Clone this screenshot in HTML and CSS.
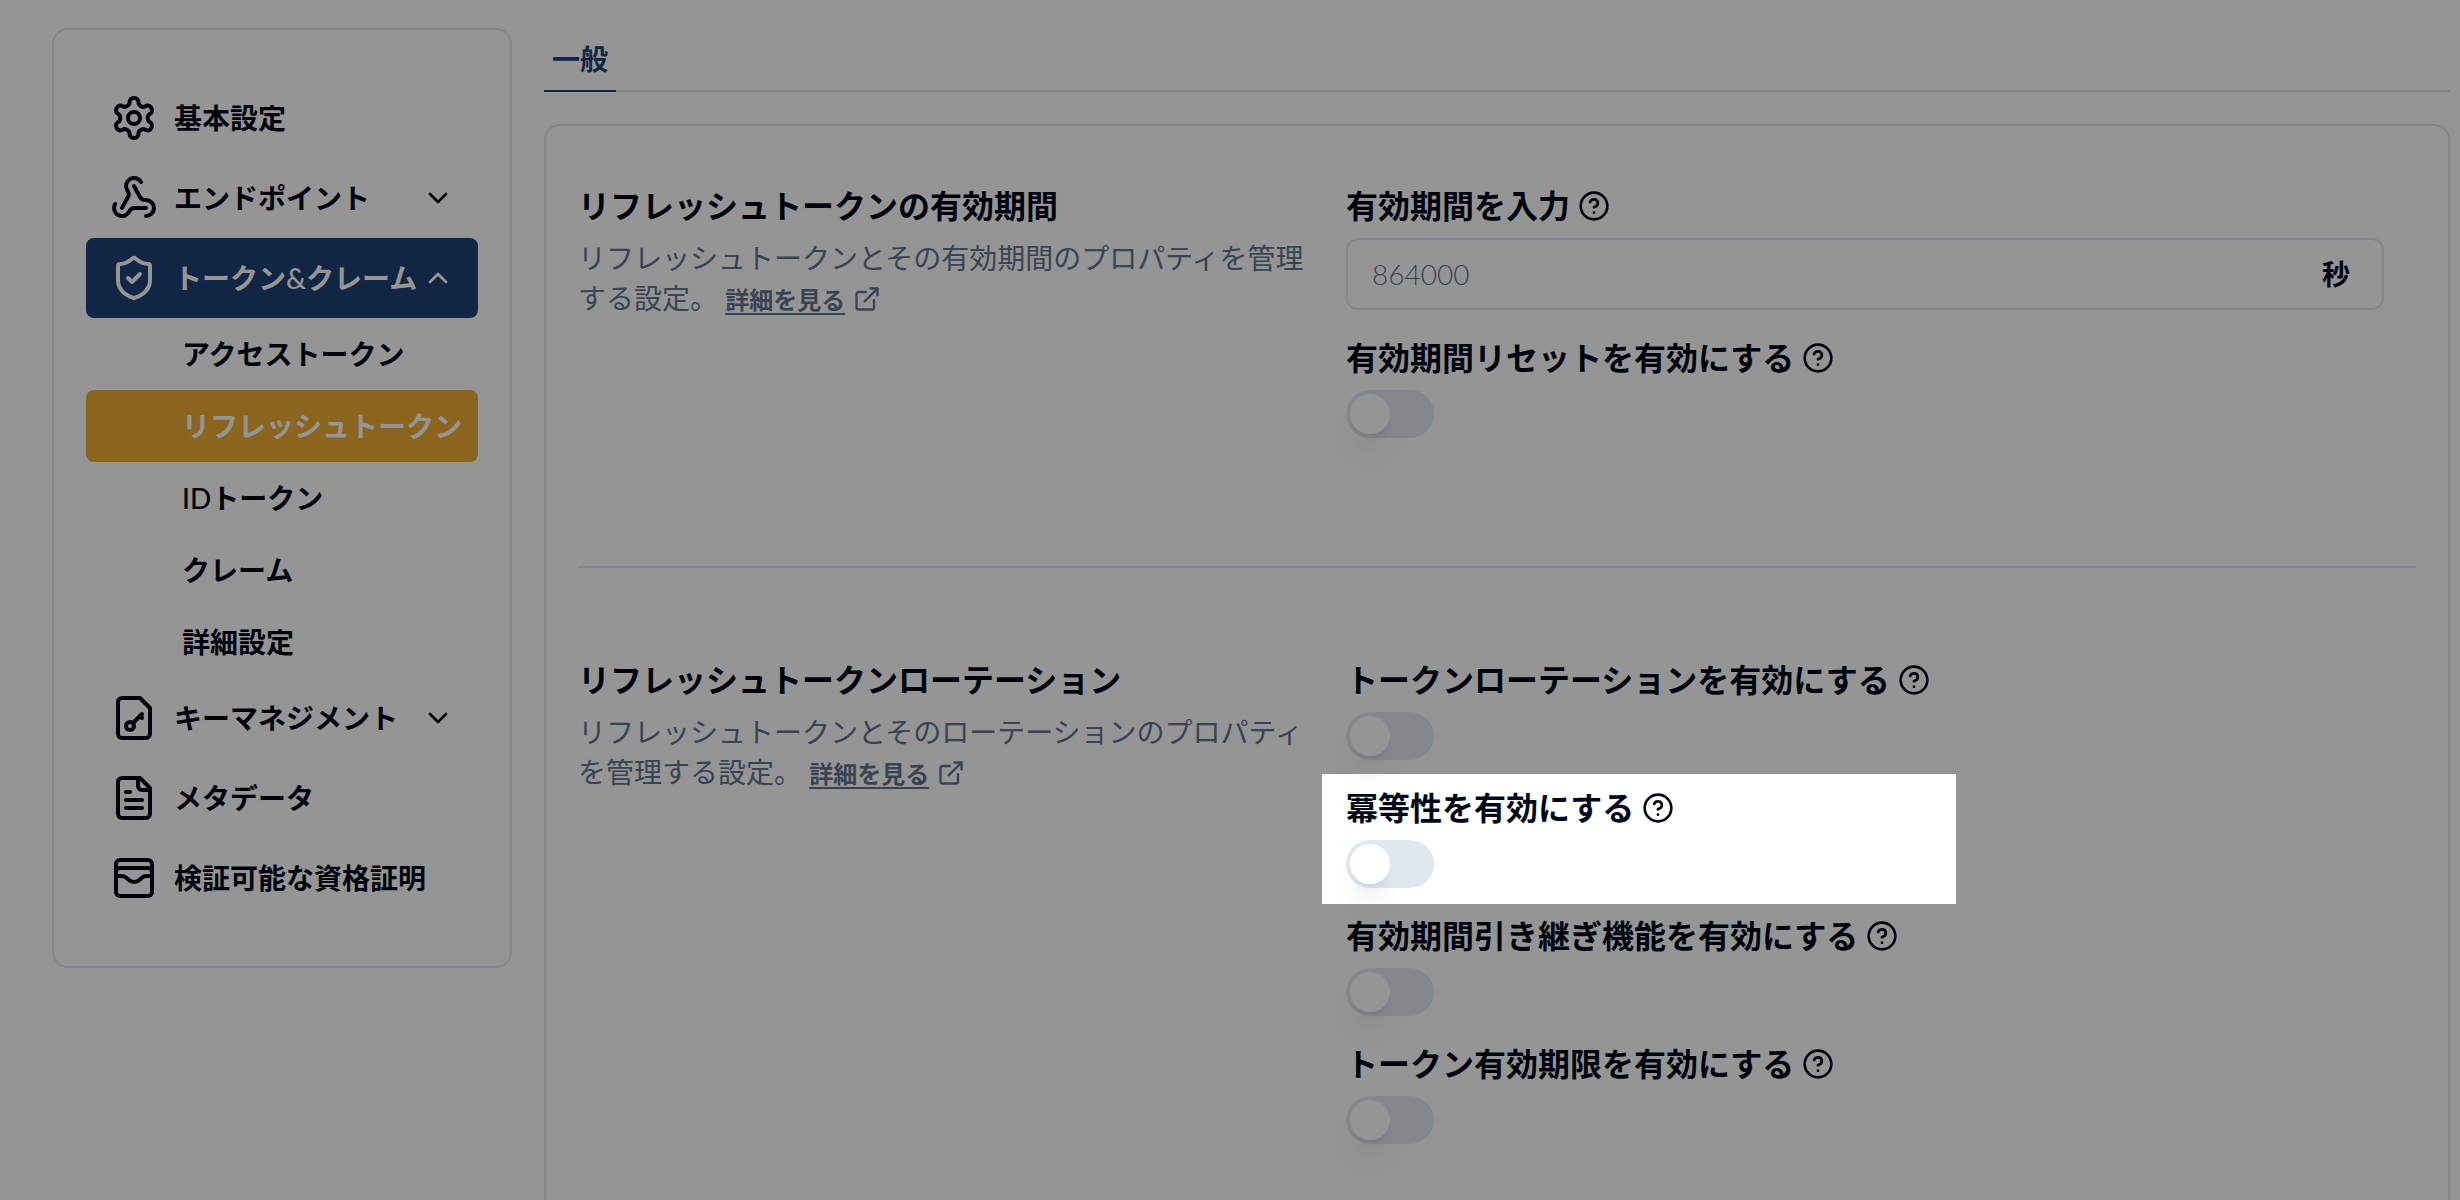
FILE: index.html
```
<!DOCTYPE html>
<html lang="ja">
<head>
  <meta charset="UTF-8" />
  <meta name="viewport" content="width=device-width, initial-scale=1" />
  <title>リフレッシュトークン</title>
  <link rel="stylesheet" href="styles.css">
</head>
<body>
  <!-- Shared icons -->
  <svg class="sprite" aria-hidden="true">
    <symbol id="i-help" viewBox="0 0 24 24">
      <circle cx="12" cy="12" r="10"/><path d="M9.09 9a3 3 0 0 1 5.83 1c0 2-3 3-3 3"/><path d="M12 17h.01"/>
    </symbol>
    <symbol id="i-external" viewBox="0 0 24 24">
      <path d="M15 3h6v6"/><path d="M10 14 21 3"/><path d="M18 13v6a2 2 0 0 1-2 2H5a2 2 0 0 1-2-2V8a2 2 0 0 1 2-2h6"/>
    </symbol>
    <symbol id="i-down" viewBox="0 0 24 24"><path d="m6 9 6 6 6-6"/></symbol>
    <symbol id="i-up" viewBox="0 0 24 24"><path d="m18 15-6-6-6 6"/></symbol>
  </svg>

  <div class="page">
    <nav class="sidebar">
      <a class="nav-item" href="#">
        <svg class="icon icon-lg" viewBox="0 0 24 24"><path d="M12.22 2h-.44a2 2 0 0 0-2 2v.18a2 2 0 0 1-1 1.73l-.43.25a2 2 0 0 1-2 0l-.15-.08a2 2 0 0 0-2.73.73l-.22.38a2 2 0 0 0 .73 2.73l.15.1a2 2 0 0 1 1 1.72v.51a2 2 0 0 1-1 1.74l-.15.09a2 2 0 0 0-.73 2.73l.22.38a2 2 0 0 0 2.73.73l.15-.08a2 2 0 0 1 2 0l.43.25a2 2 0 0 1 1 1.73V20a2 2 0 0 0 2 2h.44a2 2 0 0 0 2-2v-.18a2 2 0 0 1 1-1.73l.43-.25a2 2 0 0 1 2 0l.15.08a2 2 0 0 0 2.73-.73l.22-.39a2 2 0 0 0-.73-2.73l-.15-.08a2 2 0 0 1-1-1.74v-.5a2 2 0 0 1 1-1.74l.15-.09a2 2 0 0 0 .73-2.73l-.22-.38a2 2 0 0 0-2.73-.73l-.15.08a2 2 0 0 1-2 0l-.43-.25a2 2 0 0 1-1-1.73V4a2 2 0 0 0-2-2z"/><circle cx="12" cy="12" r="3"/></svg>
        <span>基本設定</span>
      </a>
      <button class="nav-item" type="button" aria-expanded="false">
        <svg class="icon icon-lg" viewBox="0 0 24 24"><path d="M18 16.98h-5.99c-1.1 0-1.95.94-2.48 1.9A4 4 0 0 1 2 17c.01-.7.2-1.4.57-2"/><path d="m6 17 3.13-5.78c.53-.97.1-2.18-.5-3.1a4 4 0 1 1 6.89-4.06"/><path d="m12 6 3.13 5.73C15.66 12.7 16.9 13 18 13a4 4 0 0 1 0 8"/></svg>
        <span>エンドポイント</span>
        <svg class="icon chevron"><use href="#i-down"/></svg>
      </button>
      <button class="nav-item is-open" type="button" aria-expanded="true">
        <svg class="icon icon-lg" viewBox="0 0 24 24"><path d="M20 13c0 5-3.5 7.5-7.66 8.95a1 1 0 0 1-.67-.01C7.5 20.5 4 18 4 13V6a1 1 0 0 1 1-1c2 0 4.5-1.2 6.24-2.72a1.17 1.17 0 0 1 1.52 0C14.51 3.81 17 5 19 5a1 1 0 0 1 1 1z"/><path d="m9 12 2 2 4-4"/></svg>
        <span>トークン<span class="latin">&amp;</span>クレーム</span>
        <svg class="icon chevron"><use href="#i-up"/></svg>
      </button>
      <a class="nav-sub" href="#">アクセストークン</a>
      <a class="nav-sub is-current" href="#" aria-current="page">リフレッシュトークン</a>
      <a class="nav-sub" href="#"><span class="latin">ID</span>トークン</a>
      <a class="nav-sub" href="#">クレーム</a>
      <a class="nav-sub" href="#">詳細設定</a>
      <button class="nav-item" type="button" aria-expanded="false">
        <svg class="icon icon-lg" viewBox="0 0 24 24"><path d="M15 2H6a2 2 0 0 0-2 2v16a2 2 0 0 0 2 2h12a2 2 0 0 0 2-2V7Z"/><circle cx="10" cy="16" r="2"/><path d="m16 10-4.5 4.5"/><path d="m15 11 1 1"/></svg>
        <span>キーマネジメント</span>
        <svg class="icon chevron"><use href="#i-down"/></svg>
      </button>
      <a class="nav-item" href="#">
        <svg class="icon icon-lg" viewBox="0 0 24 24"><path d="M15 2H6a2 2 0 0 0-2 2v16a2 2 0 0 0 2 2h12a2 2 0 0 0 2-2V7Z"/><path d="M14 2v4a2 2 0 0 0 2 2h4"/><path d="M10 9H8"/><path d="M16 13H8"/><path d="M16 17H8"/></svg>
        <span>メタデータ</span>
      </a>
      <a class="nav-item" href="#">
        <svg class="icon icon-lg" viewBox="0 0 24 24"><rect x="3" y="3" width="18" height="18" rx="2"/><path d="M3 9a2 2 0 0 1 2-2h14a2 2 0 0 1 2 2"/><path d="M3 11h3c.8 0 1.6.3 2.1.9l1.1.9c1.6 1.6 4.1 1.6 5.7 0l1.1-.9c.5-.5 1.3-.9 2.1-.9H21"/></svg>
        <span>検証可能な資格証明</span>
      </a>
    </nav>

    <main class="main">
      <div class="tabs" role="tablist">
        <button class="tab" type="button" role="tab" aria-selected="true">一般</button>
      </div>

      <div class="card">
        <section class="section">
          <div class="info">
            <h2>リフレッシュトークンの有効期間</h2>
            <p>リフレッシュトークンとその有効期間のプロパティを管理する設定。 <a class="more" href="#">詳細を見る</a><svg class="icon icon-link"><use href="#i-external"/></svg></p>
          </div>
          <div class="fields">
            <div class="field">
              <div class="field-label">
                <label for="lifetime">有効期間を入力</label>
                <svg class="icon"><use href="#i-help"/></svg>
              </div>
              <div class="input-box">
                <input id="lifetime" type="text" inputmode="numeric" placeholder="864000" />
                <span>秒</span>
              </div>
            </div>
            <div class="field">
              <div class="field-label">
                <label for="reset">有効期間リセットを有効にする</label>
                <svg class="icon"><use href="#i-help"/></svg>
              </div>
              <input id="reset" class="switch" type="checkbox" role="switch" />
            </div>
          </div>
        </section>

        <hr>

        <section class="section">
          <div class="info">
            <h2>リフレッシュトークンローテーション</h2>
            <p>リフレッシュトークンとそのローテーションのプロパティを管理する設定。 <a class="more" href="#">詳細を見る</a><svg class="icon icon-link"><use href="#i-external"/></svg></p>
          </div>
          <div class="fields">
            <div class="field">
              <div class="field-label">
                <label for="rotation">トークンローテーションを有効にする</label>
                <svg class="icon"><use href="#i-help"/></svg>
              </div>
              <input id="rotation" class="switch" type="checkbox" role="switch" />
            </div>
            <div class="field spotlight">
              <div class="field-label">
                <label for="idempotency">冪等性を有効にする</label>
                <svg class="icon"><use href="#i-help"/></svg>
              </div>
              <input id="idempotency" class="switch" type="checkbox" role="switch" />
            </div>
            <div class="field">
              <div class="field-label">
                <label for="inherit">有効期間引き継ぎ機能を有効にする</label>
                <svg class="icon"><use href="#i-help"/></svg>
              </div>
              <input id="inherit" class="switch" type="checkbox" role="switch" />
            </div>
            <div class="field">
              <div class="field-label">
                <label for="expiry">トークン有効期限を有効にする</label>
                <svg class="icon"><use href="#i-help"/></svg>
              </div>
              <input id="expiry" class="switch" type="checkbox" role="switch" />
            </div>
          </div>
        </section>
      </div>
    </main>
  </div>
</body>
</html>
```
FILE: styles.css
```
* {
  box-sizing: border-box;
}
body {
  margin: 0;
  height: 100vh;
  overflow: hidden;
  background: #fff;
  color: #020817;
  font-family: Lato, "Noto Sans CJK JP", sans-serif;
  font-size: 28px;
  line-height: 40px;
}
button, input {
  font: inherit;
  color: inherit;
}
button {
  border: 0;
  background: none;
  cursor: pointer;
}
.sprite {
  display: none;
}
.icon {
  width: 32px;
  height: 32px;
  flex: none;
  fill: none;
  stroke: currentColor;
  stroke-width: 2;
  stroke-linecap: round;
  stroke-linejoin: round;
}
.icon-lg {
  width: 48px;
  height: 48px;
}
.page {
  display: flex;
  align-items: flex-start;
  gap: 32px;
  padding: 28px 10px 28px 52px;
}

/* Sidebar */
.sidebar {
  flex: 0 0 460px;
  padding: 48px 32px;
  border: 2px solid #e2e8f0;
  border-radius: 16px;
}
.nav-item, .nav-sub {
  display: flex;
  align-items: center;
  width: 100%;
  border-radius: 8px;
  color: inherit;
  font-weight: 700;
  text-decoration: none;
  white-space: nowrap;
}
.nav-item {
  gap: 16px;
  height: 80px;
  padding: 0 24px;
}
.nav-sub {
  height: 72px;
  padding-left: 96px;
}
.latin {
  font-weight: 500;
}
.chevron {
  margin-left: auto;
}
.is-open {
  gap: 0;
  background: #224075;
  color: #fff;
}
.is-open .icon-lg {
  margin-right: 16px;
}
.is-current {
  background: #eead35;
  color: #fff;
}

/* Main */
.main {
  flex: 1;
  min-width: 0;
}
.tabs {
  display: flex;
  margin-bottom: 32px;
  box-shadow: inset 0 -2px #e2e8f0;
}
.tab {
  height: 64px;
  padding: 0 8px;
  border-bottom: 2px solid #224075;
  color: #224075;
  font-weight: 700;
}
.card {
  padding: 56px 32px 128px;
  border: 2px solid #e2e8f0;
  border-radius: 16px;
}
.card hr {
  height: 2px;
  margin: 128px 0 88px;
  border: 0;
  background: #e2e8f0;
}
.section {
  display: grid;
  grid-template-columns: 736px 1fr;
  gap: 32px;
  padding-right: 32px;
}
.info h2 {
  margin: 0 0 8px;
  font-size: 32px;
  line-height: 48px;
  font-weight: 700;
}
.info p {
  margin: 0;
  color: #64748b;
}
.more {
  color: inherit;
  font-size: 24px;
  font-weight: 700;
  text-underline-offset: 4px;
}
.icon-link {
  width: 28px;
  height: 28px;
  margin-left: 8px;
  vertical-align: -4px;
}
.fields {
  display: grid;
  gap: 24px;
}
.field-label {
  display: flex;
  align-items: center;
  gap: 8px;
  height: 48px;
  margin-bottom: 8px;
  font-size: 32px;
  font-weight: 700;
}
.input-box {
  display: flex;
  align-items: center;
  height: 72px;
  padding: 0 32px 0 24px;
  border: 2px solid #e2e8f0;
  border-radius: 12px;
  font-weight: 700;
}
.input-box input {
  flex: 1;
  min-width: 0;
  padding: 0;
  border: 0;
  outline: 0;
  background: none;
  font-weight: 300;
}
.input-box input::placeholder {
  color: #64748b;
}
.switch {
  display: block;
  appearance: none;
  width: 88px;
  height: 48px;
  margin: 0;
  padding: 4px;
  border-radius: 24px;
  background: #e2e8f0;
  cursor: pointer;
}
.switch::before {
  content: "";
  display: block;
  width: 40px;
  height: 40px;
  border-radius: 50%;
  background: #fff;
  box-shadow: 0 20px 30px -6px rgba(0, 0, 0, 0.1), 0 8px 12px -8px rgba(0, 0, 0, 0.1);
}
.switch:checked {
  background: #224075;
}
.switch:checked::before {
  margin-left: 40px;
}

/* Everything outside the highlighted field is dimmed */
.spotlight {
  position: relative;
}
.spotlight::after {
  content: "";
  position: absolute;
  z-index: 10;
  top: -10px;
  bottom: -16px;
  left: -24px;
  width: 634px;
  box-shadow: 0 0 0 3000px rgba(0, 0, 0, 0.416);
  pointer-events: none;
}
```
